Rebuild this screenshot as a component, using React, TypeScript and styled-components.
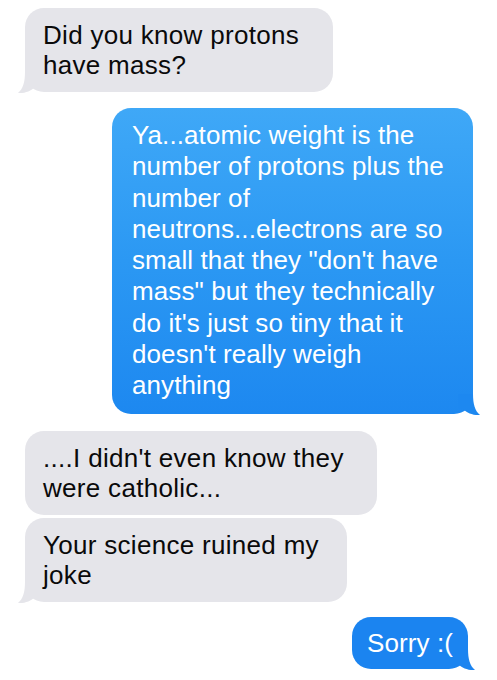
import React from "react";
import styled, { createGlobalStyle } from "styled-components";

const Global = createGlobalStyle`
  html, body { margin: 0; padding: 0; background: #ffffff; }
  body { font-family: "Liberation Sans", Arial, sans-serif; }
`;

const Thread = styled.div`
  width: 497px;
  height: 680px;
  box-sizing: border-box;
  padding: 8px 24px 0 25px;
  display: flex;
  flex-direction: column;
  background: #ffffff;
  overflow: hidden;
`;

type Side = "in" | "out";

const Row = styled.div<{ $side: Side; $gap: number; $inset: number }>`
  display: flex;
  justify-content: ${(p) => (p.$side === "in" ? "flex-start" : "flex-end")};
  margin-top: ${(p) => p.$gap}px;
  padding-right: ${(p) => p.$inset}px;
`;

const Bubble = styled.div<{ $side: Side; $w: number; $lh: number; $pl: number; $grad: string }>`
  position: relative;
  box-sizing: border-box;
  width: ${(p) => p.$w}px;
  padding: 12px 0 12px ${(p) => p.$pl}px;
  border-radius: 19px;
  font-size: 26px;
  line-height: ${(p) => p.$lh}px;
  letter-spacing: ${(p) => (p.$side === "in" ? "0.3px" : "0.1px")};
  color: ${(p) => (p.$side === "in" ? "#0a0a0a" : "#ffffff")};
  background: ${(p) => (p.$side === "in" ? "#e5e5ea" : p.$grad)};
`;

const Line = styled.div`
  white-space: nowrap;
`;

const Tail = styled.svg<{ $side: Side }>`
  position: absolute;
  bottom: -2px;
  width: 22px;
  height: 22px;
  ${(p) => (p.$side === "in" ? "left: -7px;" : "right: -7px; transform: scaleX(-1);")}
`;

function TailShape({ side, color }: { side: Side; color: string }) {
  return (
    <Tail $side={side} viewBox="0 0 22 22">
      <path d="M7 0 C7 10 5 17 0 21 C7 21.5 13 19 17 15 L22 15 L22 0 Z" fill={color} />
    </Tail>
  );
}

type Msg = {
  side: Side;
  gap: number;
  inset?: number;
  w: number;
  lh: number;
  pl: number;
  lines: string[];
  tail: boolean;
  grad?: string;
  tailColor?: string;
};

const messages: Msg[] = [
  {
    side: "in",
    gap: 0,
    w: 308,
    lh: 30,
    pl: 18,
    lines: ["Did you know protons", "have mass?"],
    tail: true,
  },
  {
    side: "out",
    gap: 16,
    w: 361,
    lh: 31.3,
    pl: 20,
    lines: [
      "Ya...atomic weight is the",
      "number of protons plus the",
      "number of",
      "neutrons...electrons are so",
      "small that they \"don't have",
      "mass\" but they technically",
      "do it's just so tiny that it",
      "doesn't really weigh",
      "anything",
    ],
    tail: true,
    grad: "linear-gradient(180deg, #3fa8f7 0%, #2b98f3 50%, #1d88f0 100%)",
    tailColor: "#1d88f0",
  },
  {
    side: "in",
    gap: 17,
    w: 352,
    lh: 30,
    pl: 18,
    lines: ["....I didn't even know they", "were catholic..."],
    tail: false,
  },
  {
    side: "in",
    gap: 3,
    w: 322,
    lh: 30,
    pl: 18,
    lines: ["Your science ruined my", "joke"],
    tail: true,
  },
  {
    side: "out",
    gap: 15,
    inset: 5,
    w: 116,
    lh: 28,
    pl: 15,
    lines: ["Sorry :("],
    tail: true,
    grad: "#1b84f0",
    tailColor: "#1b84f0",
  },
];

export default function App() {
  return (
    <>
      <Global />
      <Thread>
        {messages.map((m, i) => (
          <Row key={i} $side={m.side} $gap={m.gap} $inset={m.inset ?? 0}>
            <Bubble $side={m.side} $w={m.w} $lh={m.lh} $pl={m.pl} $grad={m.grad ?? ""}>
              {m.lines.map((l, j) => (
                <Line key={j}>{l}</Line>
              ))}
              {m.tail && (
                <TailShape side={m.side} color={m.side === "in" ? "#e5e5ea" : m.tailColor ?? "#1d88f0"} />
              )}
            </Bubble>
          </Row>
        ))}
      </Thread>
    </>
  );
}
